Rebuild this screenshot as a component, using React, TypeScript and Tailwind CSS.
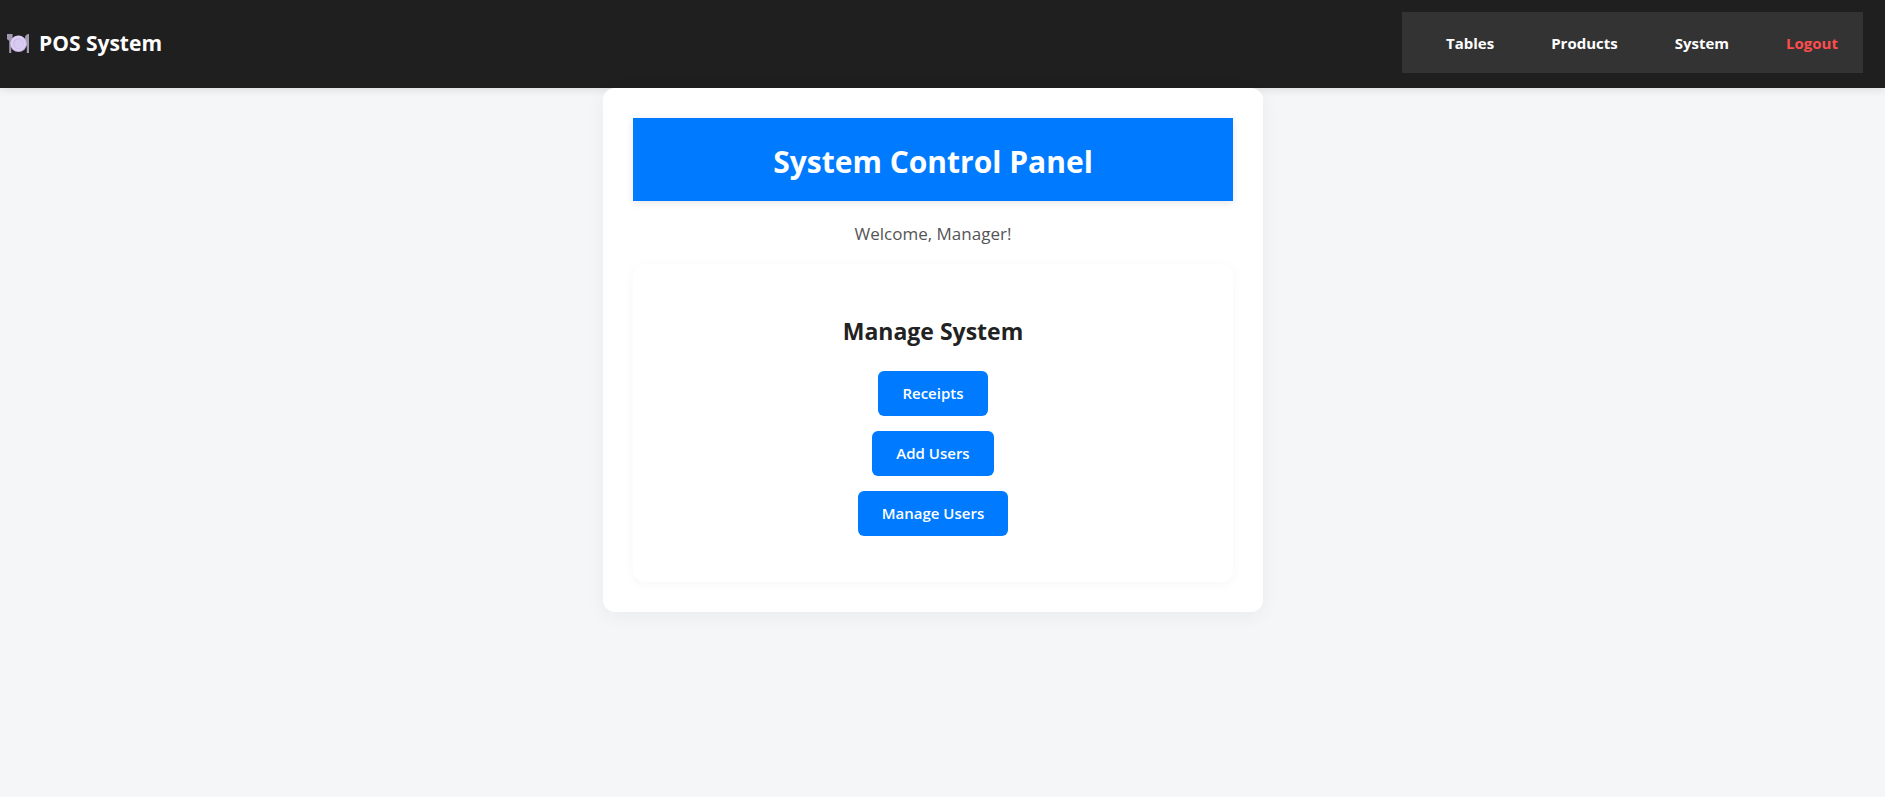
const navLinks = [
  { label: "Tables", className: "text-white" },
  { label: "Products", className: "text-white" },
  { label: "System", className: "text-white" },
  { label: "Logout", className: "text-[#ff4d4d]" },
];

const actions = ["Receipts", "Add Users", "Manage Users"];

function PlateIcon() {
  return (
    <svg width="22" height="20" viewBox="0 0 22 20" aria-hidden="true">
      <path d="M0 0h5.6v5.2L4.2 6.8V19H2.2V6.8L0 5.2z" fill="#a197ae" />
      <path d="M22 0v19h-2.2v-7H18V4c0-2.4 1.6-4 4-4z" fill="#a197ae" />
      <circle cx="11.5" cy="9.8" r="8.3" fill="#c3b3df" />
      <circle cx="11.3" cy="9.3" r="7.6" fill="#dccff3" />
      <circle cx="11.3" cy="9.5" r="5.2" fill="#c6b5e3" />
      <circle cx="11.7" cy="9.9" r="4.7" fill="#d9caf1" />
    </svg>
  );
}

export default function App() {
  return (
    <div className="min-h-screen bg-[#f4f6f8] font-['Open_Sans','Noto_Sans',sans-serif] text-[#222]">
      <header className="flex h-[88px] items-start justify-between bg-[#1f1f1f] pt-3 pr-[22px] pl-[7px] shadow-[0_2px_8px_rgba(0,0,0,0.1)]">
        <div className="flex h-16 items-center gap-[10px] text-[21px] font-bold text-white">
          <PlateIcon />
          <span>POS System</span>
        </div>
        <nav className="flex h-[61px] items-center gap-[57px] bg-[#333] pt-px pr-[25px] pl-11 text-[15px] font-bold">
          {navLinks.map((link) => (
            <a key={link.label} href="#" className={link.className}>
              {link.label}
            </a>
          ))}
        </nav>
      </header>
      <div className="pr-[19px]">
        <main className="mx-auto max-w-[660px] rounded-xl bg-white p-[30px] text-center shadow-[0_4px_20px_rgba(0,0,0,0.05)]">
          <h1 className="bg-[#007bff] pt-[22px] pb-[18px] text-[30px] leading-[43px] font-bold text-white shadow-[0_2px_8px_rgba(0,0,0,0.1)]">
            System Control Panel
          </h1>
          <p className="pt-[21px] pb-[19px] text-[17px] leading-[23px] text-[#555]">
            Welcome, Manager!
          </p>
          <section className="rounded-xl bg-white px-5 pt-[50px] pb-[46px] shadow-[0_2px_12px_rgba(0,0,0,0.04)]">
            <h2 className="mb-[22px] text-[23px] leading-[35px] font-bold">
              Manage System
            </h2>
            <div className="flex flex-col items-center gap-[15px]">
              {actions.map((action) => (
                <button
                  key={action}
                  type="button"
                  className="h-[45px] rounded-md bg-[#007bff] px-6 text-[15px] font-semibold text-white"
                >
                  {action}
                </button>
              ))}
            </div>
          </section>
        </main>
      </div>
    </div>
  );
}
